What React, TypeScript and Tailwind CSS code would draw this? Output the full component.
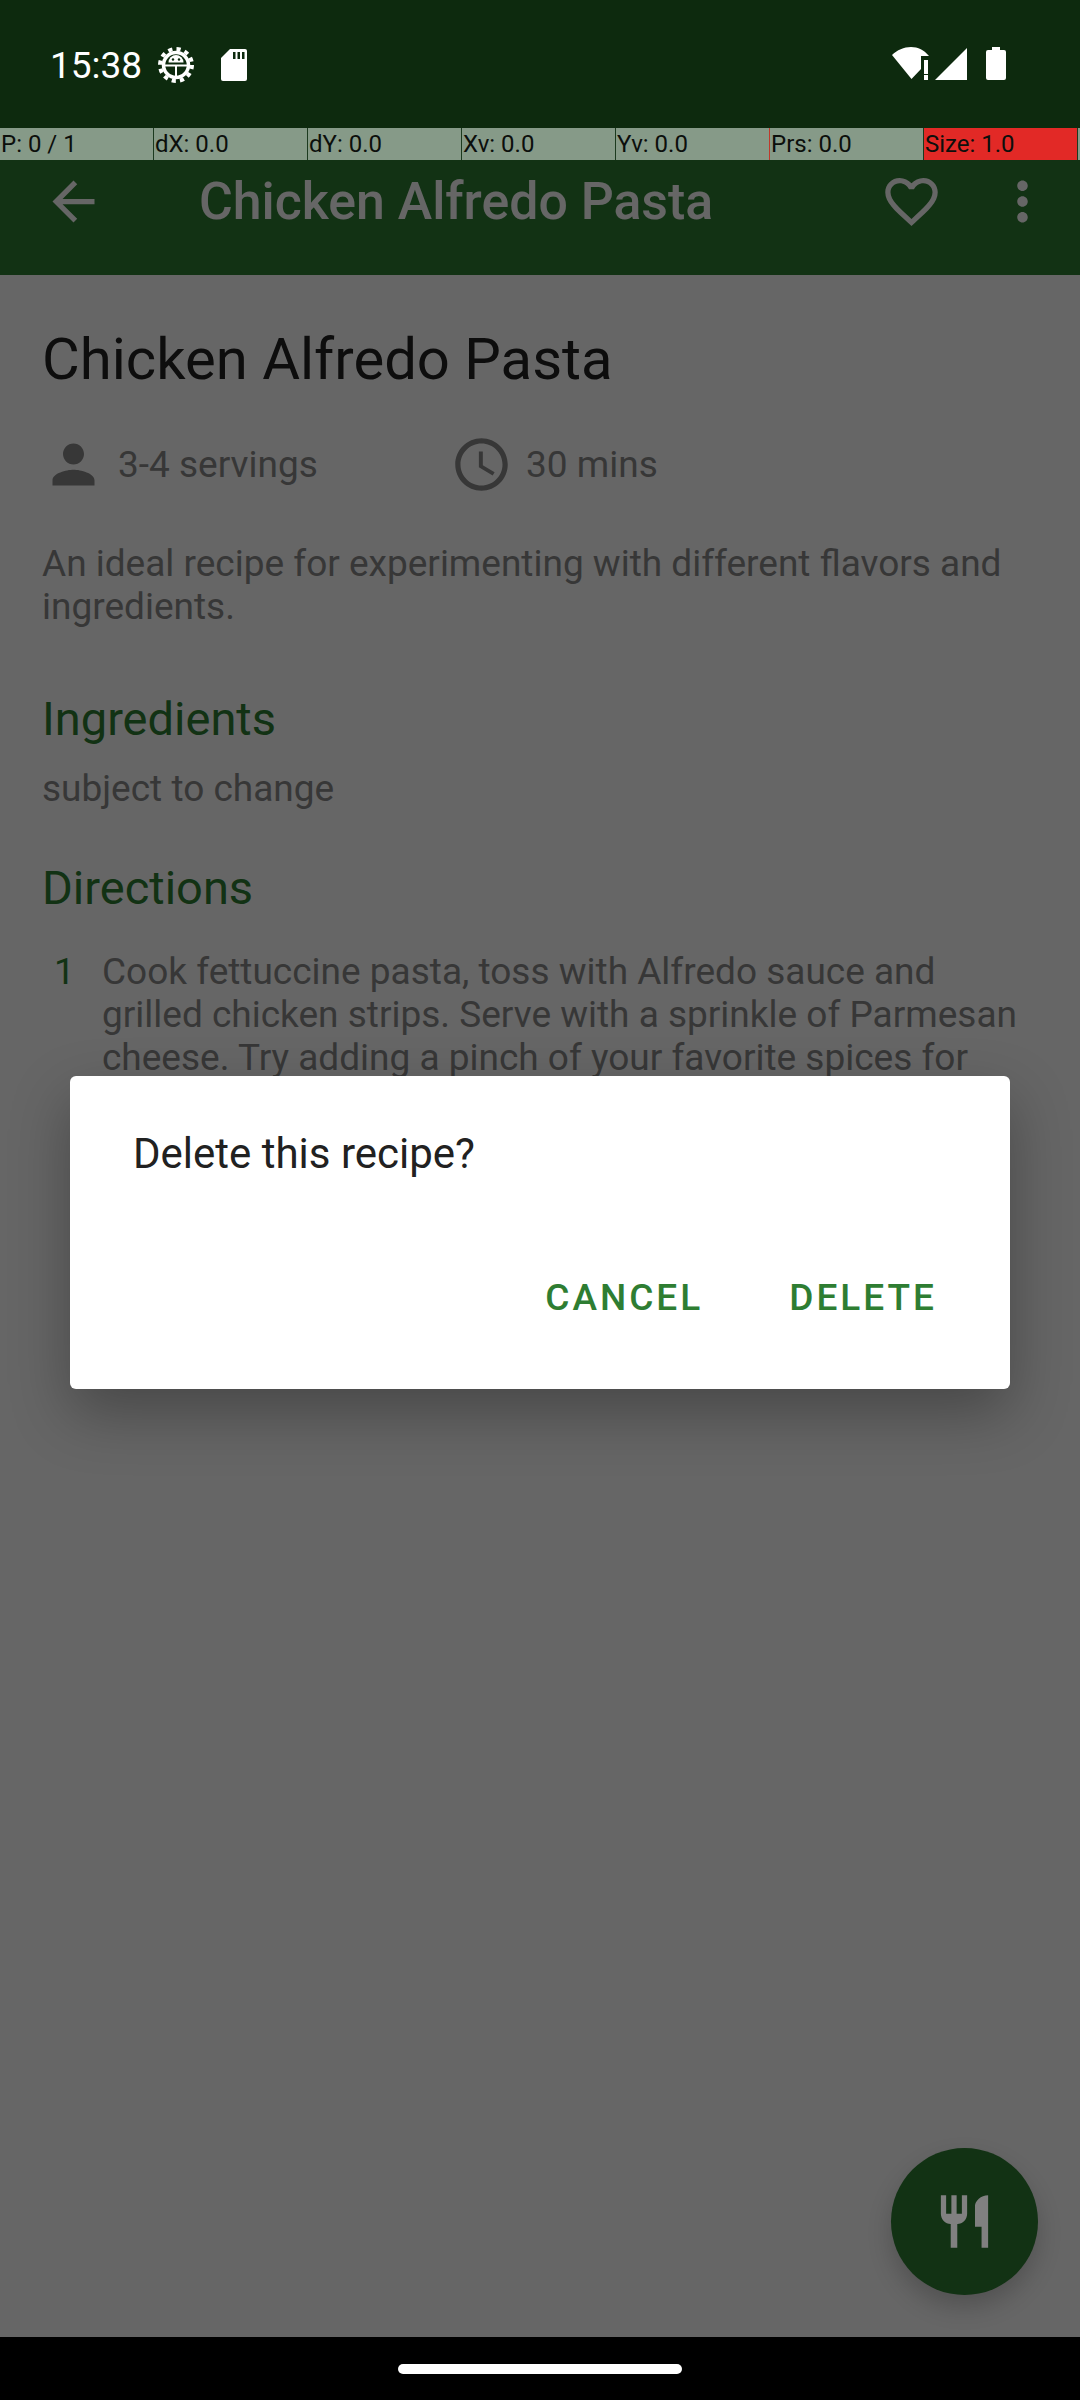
const restaurant = 'M11 9H9V2H7v7H5V2H3v7c0 2.12 1.66 3.84 3.75 3.97V22h2.5v-9.03C11.34 12.84 13 11.12 13 9V2h-2v7zm5-3v8h2.5v8H21V2c-2.76 0-5 2.24-5 4z'
const clock = 'M11.99 2C6.47 2 2 6.48 2 12s4.47 10 9.99 10C17.52 22 22 17.52 22 12S17.52 2 11.99 2zM12 20c-4.42 0-8-3.58-8-8s3.58-8 8-8 8 3.58 8 8-3.58 8-8 8zM12.5 7H11v6l5.25 3.15.75-1.23-4.5-2.67z'
const person = 'M12 12c2.21 0 4-1.79 4-4s-1.79-4-4-4-4 1.79-4 4 1.79 4 4 4zm0 2c-2.67 0-8 1.34-8 4v2h16v-2c0-2.66-5.33-4-8-4z'
const arrowBack = 'M20 11H7.83l5.59-5.59L12 4l-8 8 8 8 1.41-1.41L7.83 13H20v-2z'
const heart = 'M16.5 3c-1.74 0-3.41.81-4.5 2.09C10.91 3.81 9.24 3 7.5 3 4.42 3 2 5.42 2 8.5c0 3.78 3.4 6.86 8.55 11.54L12 21.35l1.45-1.32C18.6 15.36 22 12.28 22 8.5 22 5.42 19.58 3 16.5 3zm-4.4 15.55l-.1.1-.1-.1C7.14 14.24 4 11.39 4 8.5 4 6.5 5.5 5 7.5 5c1.54 0 3.04.99 3.57 2.36h1.87C13.46 5.99 14.96 5 16.5 5c2 0 3.5 1.5 3.5 3.5 0 2.89-3.14 5.74-7.9 10.05z'
const moreVert = 'M12 8c1.1 0 2-.9 2-2s-.9-2-2-2-2 .9-2 2 .9 2 2 2zm0 2c-1.1 0-2 .9-2 2s.9 2 2 2 2-.9 2-2-.9-2-2-2zm0 6c-1.1 0-2 .9-2 2s.9 2 2 2 2-.9 2-2-.9-2-2-2z'

const Icon = ({ d, className }: { d: string; className: string }) => (
  <svg viewBox="0 0 24 24" fill="currentColor" className={className}>
    <path d={d} />
  </svg>
)

const traces = [
  { label: 'P: 0 / 1', cell: 'bg-[#869a88]', line: 'border-[#869a88]' },
  { label: 'dX: 0.0', cell: 'bg-[#869a88]', line: 'border-[#1c3a1f]' },
  { label: 'dY: 0.0', cell: 'bg-[#869a88]', line: 'border-[#1c3a1f]' },
  { label: 'Xv: 0.0', cell: 'bg-[#869a88]', line: 'border-[#1c3a1f]' },
  { label: 'Yv: 0.0', cell: 'bg-[#869a88]', line: 'border-[#1c3a1f]' },
  { label: 'Prs: 0.0', cell: 'bg-[#869a88]', line: 'border-[#c0392b]' },
  { label: 'Size: 1.0', cell: 'bg-[#e22926]', line: 'border-[#1c3a1f]' },
  { label: '', cell: 'bg-[#869a88]', line: 'border-[#1c3a1f]' },
]

const StatusBar = () => (
  <div className="relative z-20 flex h-[128px] items-start justify-between bg-[#0d2a0e] pl-[50px] pr-[74px] pt-[46px] text-white">
    <div className="flex items-center">
      <span className="mt-[2px] text-[37px] leading-[36px]">15:38</span>
      <svg viewBox="0 0 36 36" className="ml-[16px] h-[36px] w-[36px]">
        <circle cx="18" cy="18" r="16" fill="none" stroke="white" strokeWidth="4" strokeDasharray="4.2 4.18" />
        <circle cx="18" cy="18" r="12.5" fill="none" stroke="white" strokeWidth="3.5" />
        <path d="M10.5 15.5a7.5 7.5 0 0 1 15 0z" fill="white" />
        <path d="M7 17.5h22v2H19v10h-2v-10H7z" fill="white" />
        <circle cx="15" cy="12.5" r="1.2" fill="#0d2a0e" />
        <circle cx="21" cy="12.5" r="1.2" fill="#0d2a0e" />
      </svg>
      <svg viewBox="0 0 26 32" className="ml-[27px] h-[32px] w-[26px]">
        <path d="M9 0h15a2 2 0 0 1 2 2v28a2 2 0 0 1-2 2H2a2 2 0 0 1-2-2V9z" fill="white" />
        <path d="M12 3h2.5v7H12zM16.5 3H19v7h-2.5zM21 3h2.5v7H21z" fill="#0d2a0e" />
      </svg>
    </div>
    <div className="mt-px flex items-start">
      <svg viewBox="0 0 40 34" className="h-[34px] w-[40px]">
        <path d="M0 8C5 3 12 0 19 0c7 0 13 3 18 9H29v13l-9.500 10z" fill="white" />
        <path d="M32 13h4v14h-4zM32 28h4v5h-4z" fill="white" />
      </svg>
      <svg viewBox="0 0 32 32" className="ml-[3px] mt-px h-[32px] w-[32px]">
        <path d="M32 0v32H0z" fill="white" />
      </svg>
      <svg viewBox="0 0 20 33" className="ml-[19px] h-[33px] w-[20px]">
        <path d="M6 0h8v3h4a2 2 0 0 1 2 2v26a2 2 0 0 1-2 2H2a2 2 0 0 1-2-2V5a2 2 0 0 1 2-2h4z" fill="white" />
      </svg>
    </div>
  </div>
)

const PointerBar = () => (
  <div className="absolute left-[-1px] right-0 top-[128px] z-20 grid h-[32px] grid-cols-[repeat(7,154px)_1fr] text-[24px] leading-[32px] text-[#0c0f0c]">
    {traces.map((t) => (
      <div key={t.label} className={`${t.cell} ${t.line} overflow-hidden whitespace-nowrap border-l pl-[1px]`}>
        {t.label}
      </div>
    ))}
  </div>
)

const App = () => {
  return (
    <div className="relative flex h-[2400px] w-[1080px] flex-col overflow-hidden bg-white font-['Roboto',sans-serif]">
      <StatusBar />
      <PointerBar />

      <header className="flex h-[147px] items-center bg-[#2e7d32] pl-[42px] pr-[26px] text-white">
        <Icon d={arrowBack} className="h-[63px] w-[63px]" />
        <h1 className="ml-[94px] flex-1 text-[51.8px] font-medium">Chicken Alfredo Pasta</h1>
        <Icon d={heart} className="h-[63px] w-[63px]" />
        <Icon d={moreVert} className="ml-[48px] h-[63px] w-[63px]" />
      </header>

      <main className="flex-1 px-[42px] text-[#8a8a8a]">
        <h2 className="mt-[48px] text-[58px] leading-[72px] text-[#212121]">Chicken Alfredo Pasta</h2>

        <div className="mt-[38px] flex items-center">
          <div className="flex w-[408px] items-center">
            <Icon d={person} className="h-[63px] w-[63px]" />
            <span className="ml-[13px] text-[37px]">3-4 servings</span>
          </div>
          <Icon d={clock} className="h-[63px] w-[63px]" />
          <span className="ml-[13px] text-[37px]">30 mins</span>
        </div>

        <p className="mt-[46px] text-[37px] leading-[43px]">
          An ideal recipe for experimenting with different flavors and ingredients.
        </p>

        <h3 className="mt-[61px] text-[47px] leading-[60px] text-[#2e7d32]">Ingredients</h3>
        <p className="mt-[18px] text-[37px] leading-[43px]">subject to change</p>

        <h3 className="mt-[48px] text-[47px] leading-[60px] text-[#2e7d32]">Directions</h3>
        <div className="mt-[32px] flex">
          <span className="w-[60px] pl-[12px] text-[37px] leading-[43px] text-[#2e7d32]">1</span>
          <p className="flex-1 text-[37px] leading-[43px]">
            Cook fettuccine pasta, toss with Alfredo sauce and grilled chicken strips. Serve with a sprinkle of Parmesan cheese. Try adding a pinch of your favorite spices for
          </p>
        </div>
      </main>

      {/* scrim under the dialog */}
      <div className="absolute inset-0 z-10 bg-black/60" />

      <button className="absolute left-[891px] top-[2148px] z-20 flex h-[147px] w-[147px] items-center justify-center rounded-full bg-[#123214] text-[#808080] shadow-[0_12px_24px_rgba(0,0,0,0.2)]">
        <Icon d={restaurant} className="h-[63px] w-[63px]" />
      </button>

      <div className="absolute left-[70px] top-[1076px] z-20 h-[313px] w-[940px] rounded-[6px] bg-white shadow-[0_24px_60px_rgba(0,0,0,0.3)]">
        <p className="pl-[63px] pt-[53px] text-[42px] leading-[50px] text-[#212121]">Delete this recipe?</p>
        <div className="mt-[91px] flex justify-end pr-[73px] text-[37px] font-medium uppercase tracking-[3px] text-[#2e7d32]">
          <button className="uppercase">Cancel</button>
          <button className="ml-[86px] uppercase">Delete</button>
        </div>
      </div>

      <div className="relative z-20 flex h-[63px] items-center justify-center bg-black">
        <div className="h-[10px] w-[284px] rounded-full bg-white" />
      </div>
    </div>
  )
}

export default App
